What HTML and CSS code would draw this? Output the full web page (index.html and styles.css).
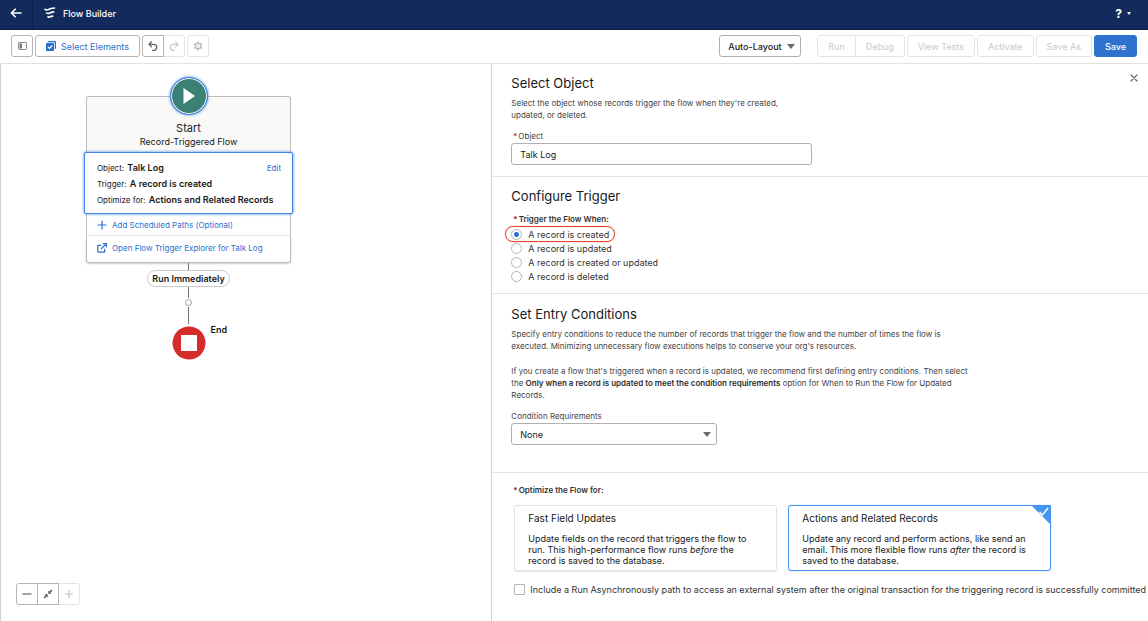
FILE: index.html
```html
<!DOCTYPE html>
<html lang="en">
<head>
<meta charset="utf-8">
<meta name="viewport" content="width=device-width, initial-scale=1">
<title>Flow Builder</title>
<link rel="stylesheet" href="styles.css">
</head>
<body>
<header class="topbar">
  <button class="back" type="button" aria-label="Back">
    <svg width="12" height="10" viewBox="0 0 12 10"><path d="M11 5H1.5M5.200 1.200 1.400 5l3.800 3.800" fill="none" stroke="#fff" stroke-width="1.600" stroke-linecap="round" stroke-linejoin="round"/></svg>
  </button>
  <svg class="brand-icon" width="12" height="12" viewBox="0 0 12 12"><path d="M1 2.400c1.600 1.300 3.200.3 4.800-.4C7.500 1.200 9 1.400 10.500 1M2.600 6c1.200 1 2.400.3 3.700-.2C7.500 5.200 8.500 5.200 9.700 4.900M4 9.800c1 .8 1.800.2 2.600-.2.7-.3 1.200-.4 2-.5" fill="none" stroke="#fff" stroke-width="1.600" stroke-linecap="round"/></svg>
  <span class="brand">Flow Builder</span>
  <button class="help" type="button" aria-label="Help">
    <span class="help-mark">?</span><svg width="4" height="3" viewBox="0 0 4 3"><path d="M0 0h4L2 3z" fill="#fff"/></svg>
  </button>
</header>

<nav class="toolbar" aria-label="Flow toolbar">
  <button class="btn icon-btn" type="button" aria-label="Toggle toolbox">
    <svg width="9" height="8" viewBox="0 0 9 8"><rect x=".5" y=".5" width="8" height="7" rx=".6" fill="none" stroke="#8a8a8a"/><path d="M1.500 1.500h2.500v5H1.500z" fill="#777"/></svg>
  </button>
  <button class="btn select-elements" type="button">
    <svg width="10" height="10" viewBox="0 0 10 10"><path d="M2.500 0h6.800q.7 0 .7.700v6.600q0 .7-.7.700h-.5V1.800q0-.6-.6-.6H1.800V.7q0-.7.700-.7z" fill="#2a6fcf"/><rect y="2" width="8" height="8" rx=".8" fill="#2a6fcf"/><path d="m2 6 1.500 1.500L6.300 4.500" fill="none" stroke="#fff" stroke-width="1.100"/></svg>
    Select Elements
  </button>
  <div class="group">
    <button class="btn icon-btn" type="button" aria-label="Undo">
      <svg width="10" height="10" viewBox="0 0 10 10"><path d="M3.500.8 1 3.300l2.500 2.500M1.200 3.300h4.500a3 3 0 0 1 0 6H4.500" fill="none" stroke="#666" stroke-width="1.300" stroke-linecap="round" stroke-linejoin="round"/></svg>
    </button>
    <button class="btn icon-btn" type="button" aria-label="Redo" disabled>
      <svg width="10" height="10" viewBox="0 0 10 10"><path d="M6.500.8 9 3.300 6.500 5.800M8.800 3.300H4.300a3 3 0 0 0 0 6h1.200" fill="none" stroke="#c9c9c9" stroke-width="1.200" stroke-linecap="round" stroke-linejoin="round"/></svg>
    </button>
  </div>
  <button class="btn icon-btn" type="button" aria-label="Settings" disabled>
    <svg width="10" height="10" viewBox="0 0 10 10"><circle cx="5" cy="5" r="2.700" fill="none" stroke="#b9b9b9" stroke-width="1.200"/><circle cx="5" cy="5" r=".8" fill="#c4c4c4"/><path d="M5 .5v1.600M5 7.900v1.600M1.100 2.750l1.400.8M7.500 6.450l1.400.8M1.100 7.250l1.400-.8M7.500 3.550l1.400-.8" stroke="#b9b9b9" stroke-width="1.700"/></svg>
  </button>
  <div class="picker layout-picker">
    <select aria-label="Layout mode"><option>Auto-Layout</option><option>Freeform</option></select>
  </div>
  <div class="group">
    <button class="btn" type="button" disabled>Run</button>
    <button class="btn" type="button" disabled>Debug</button>
  </div>
  <button class="btn" type="button" disabled>View Tests</button>
  <button class="btn" type="button" disabled>Activate</button>
  <button class="btn" type="button" disabled>Save As</button>
  <button class="btn save" type="button">Save</button>
</nav>

<main class="workspace">
  <section class="canvas" aria-label="Flow canvas">
    <div class="flow">
      <div class="start-icon"><svg width="12" height="16" viewBox="0 0 12 16"><path d="M.5 0 12 8 .5 16z" fill="#fff"/></svg></div>
      <article class="start-card">
        <div class="start-head">
          <h3 class="start-title">Start</h3>
          <p class="start-type">Record-Triggered Flow</p>
        </div>
        <div class="trigger">
          <div class="trigger-row"><span>Object: <b>Talk Log</b></span><a class="edit" href="#">Edit</a></div>
          <div class="trigger-row"><span>Trigger: <b>A record is created</b></span></div>
          <div class="trigger-row"><span>Optimize for: <b>Actions and Related Records</b></span></div>
        </div>
        <a class="card-link scheduled" href="#"><svg width="10" height="10" viewBox="0 0 10 10"><path d="M5 1v8M1 5h8" stroke="#2a6fcf" stroke-width="1.200" stroke-linecap="round"/></svg>Add Scheduled Paths (Optional)</a>
        <a class="card-link explorer" href="#"><svg width="10" height="10" viewBox="0 0 10 10"><path d="M4.300 2.300H1.200Q.8 2.300.8 2.700v6q0 .5.400.5h6q.5 0 .5-.5V5.800M5.800.7h3.500v3.500M9.200.8 4 6" fill="none" stroke="#2a6fcf" stroke-width="1.200"/></svg>Open Flow Trigger Explorer for Talk Log</a>
      </article>
      <i class="line line-first"></i>
      <div class="path-label">Run Immediately</div>
      <i class="line line-mid"></i>
      <button class="add-node" type="button" aria-label="Add element"></button>
      <i class="line line-last"></i>
      <div class="end-node">
        <svg width="34" height="34" viewBox="0 0 34 34"><circle cx="17" cy="17" r="16.500" fill="#d62b2b"/><path d="M9 9h16v16H9z" fill="#fff"/></svg>
        <span class="end-label">End</span>
      </div>
    </div>
    <div class="group zoom">
      <button class="btn icon-btn" type="button" aria-label="Zoom out"><svg width="10" height="10" viewBox="0 0 10 10"><path d="M.5 5h9" stroke="#666" stroke-width="1.200"/></svg></button>
      <button class="btn icon-btn" type="button" aria-label="Zoom to fit"><svg width="10" height="10" viewBox="0 0 10 10"><path d="M5.300 1.500v3.200h3.200zM4.700 8.500V5.300H1.500z" fill="#555"/><path d="M6.500 3.500 9 1M3.500 6.500 1 9" stroke="#555" stroke-width="1.500"/></svg></button>
      <button class="btn icon-btn" type="button" aria-label="Zoom in" disabled><svg width="10" height="10" viewBox="0 0 10 10"><path d="M5 1v8M1 5h8" stroke="#c4c4c4" stroke-width="1.200"/></svg></button>
    </div>
  </section>

  <form class="panel">
    <section class="section section-object">
      <div class="panel-head">
        <h2 class="heading">Select Object</h2>
        <button class="close" type="button" aria-label="Close"><svg width="8" height="8" viewBox="0 0 8 8"><path d="m1 1 6 6m0-6L1 7" stroke="#666" stroke-width="1.200" stroke-linecap="round"/></svg></button>
      </div>
      <p class="copy copy-narrow">Select the object whose records trigger the flow when they're created, updated, or deleted.</p>
      <label class="label label-object" for="object"><span class="req">*</span>Object</label>
      <input class="text-input" id="object" type="text" value="Talk Log">
    </section>

    <section class="section section-trigger">
      <h2 class="heading">Configure Trigger</h2>
      <fieldset class="fields fields-trigger">
        <legend class="legend"><span class="req">*</span>Trigger the Flow When:</legend>
        <label class="radio marked"><input type="radio" name="when" checked>A record is created</label>
        <label class="radio"><input type="radio" name="when">A record is updated</label>
        <label class="radio"><input type="radio" name="when">A record is created or updated</label>
        <label class="radio"><input type="radio" name="when">A record is deleted</label>
      </fieldset>
    </section>

    <section class="section section-entry">
      <h2 class="heading">Set Entry Conditions</h2>
      <p class="copy copy-first">Specify entry conditions to reduce the number of records that trigger the flow and the number of times the flow is executed. Minimizing unnecessary flow executions helps to conserve your org's resources.</p>
      <p class="copy copy-next">If you create a flow that's triggered when a record is updated, we recommend first defining entry conditions. Then select the <b>Only when a record is updated to meet the condition requirements</b> option for When to Run the Flow for Updated Records.</p>
      <label class="label" for="condition">Condition Requirements</label>
      <div class="picker condition-picker">
        <select id="condition"><option>None</option></select>
      </div>
    </section>

    <section class="section section-optimize">
      <fieldset class="fields">
        <legend class="legend"><span class="req">*</span>Optimize the Flow for:</legend>
        <div class="options">
          <label class="option"><input type="radio" name="optimize">
            <span class="option-title">Fast Field Updates</span>
            <span class="option-text">Update fields on the record that triggers the flow to run. This high-performance flow runs <em>before</em> the record is saved to the database.</span>
          </label>
          <label class="option"><input type="radio" name="optimize" checked>
            <span class="option-title">Actions and Related Records</span>
            <span class="option-text">Update any record and perform actions, like send an email. This more flexible flow runs <em>after</em> the record is saved to the database.</span>
            <svg class="corner" width="20" height="20" viewBox="0 0 20 20"><path d="M0 0h20v20z" fill="#4795f3"/><path d="m8.500 7 3 3L17 3" fill="none" stroke="#fff" stroke-width="1.400"/></svg>
          </label>
        </div>
      </fieldset>
      <label class="async"><input type="checkbox">Include a Run Asynchronously path to access an external system after the original transaction for the triggering record is successfully committed</label>
    </section>
  </form>
</main>
</body>
</html>
```
FILE: styles.css
```css
* {
  box-sizing: border-box;
}

body {
  margin: 0;
  min-height: 100vh;
  display: flex;
  flex-direction: column;
  background: #fff;
  color: #181818;
  font-family: Inter, "Liberation Sans", sans-serif;
  font-size: 9px;
}

h2,
h3,
p {
  margin: 0;
  font-weight: 400;
}

button,
input,
select {
  font: inherit;
  color: inherit;
}

svg {
  display: block;
  flex: none;
}

a {
  color: #2a6fcf;
  text-decoration: none;
}

/* Top bar */
.topbar {
  display: flex;
  align-items: center;
  height: 30px;
  padding-bottom: 3px;
  background: #122b5c;
  border-bottom: 1px solid #0b1d42;
  color: #fff;
}

.back {
  display: flex;
  align-items: center;
  justify-content: center;
  align-self: stretch;
  width: 33px;
  margin-bottom: -3px;
  padding: 0 0 3px;
  border: 0;
  border-right: 1px solid #0d224c;
  background: none;
}

.brand-icon {
  margin: 0 7px 0 11px;
}

.brand {
  font-weight: 500;
}

.help {
  display: flex;
  align-items: center;
  gap: 5px;
  margin-left: auto;
  padding: 0 17px 0 0;
  border: 0;
  background: none;
}

.help-mark {
  font-size: 12px;
  font-weight: 700;
}

/* Toolbar */
.toolbar {
  display: flex;
  align-items: center;
  gap: 2px;
  height: 34px;
  padding: 0 11px 1px;
  border-bottom: 1px solid #e2e2e2;
}

.btn {
  display: flex;
  align-items: center;
  justify-content: center;
  gap: 5px;
  height: 22px;
  padding: 0 10px;
  border: 1px solid #b5b5b5;
  border-radius: 3px;
  background: #fff;
  white-space: nowrap;
}

.btn:disabled {
  border-color: #e4e4e4;
  color: #c9c9c9;
}

.icon-btn {
  width: 22px;
  padding: 0;
}

.select-elements {
  color: #2a6fcf;
}

.group {
  display: flex;
}

.group .btn:not(:first-child) {
  margin-left: -1px;
  border-top-left-radius: 0;
  border-bottom-left-radius: 0;
}

.group .btn:not(:last-child) {
  border-top-right-radius: 0;
  border-bottom-right-radius: 0;
}

.group .btn:enabled {
  position: relative;
}

.save {
  border-color: #2f72cd;
  background: #2f72cd;
  color: #fff;
  font-weight: 500;
}

.picker {
  position: relative;
}

.picker::after {
  content: "";
  position: absolute;
  top: 9px;
  right: 6px;
  border: 4px solid transparent;
  border-top: 5px solid #6b6b6b;
  border-bottom: 0;
  pointer-events: none;
}

.picker select {
  appearance: none;
  display: block;
  width: 100%;
  height: 22px;
  padding: 0 8px;
  border: 1px solid #b0b0b0;
  border-radius: 3px;
  background: #fff;
}

.layout-picker {
  width: 82px;
  margin: 0 14px 0 auto;
  font-weight: 500;
}

/* Canvas */
.workspace {
  flex: 1;
  display: flex;
}

.canvas {
  flex: 0 0 42.8%;
  display: flex;
  flex-direction: column;
  justify-content: space-between;
  align-items: flex-start;
  padding: 13px 0 16px 15px;
  border-left: 1px solid #d4d4d4;
}

.flow {
  display: flex;
  flex-direction: column;
  align-items: center;
  width: 209px;
  margin-left: 68px;
}

.start-icon {
  position: relative;
  z-index: 1;
  display: flex;
  align-items: center;
  justify-content: center;
  width: 38px;
  height: 38px;
  margin-bottom: -19px;
  border: 1px solid #3f83e4;
  border-radius: 50%;
  background: #3a8075;
  box-shadow: inset 0 0 0 1px #fff, 0 0 3px #3f83e4;
}

.start-card {
  width: 100%;
  padding: 0 2px;
}

.start-head {
  padding: 24px 0 4px;
  border: 1px solid #bdbdbd;
  border-bottom: 0;
  border-radius: 3px 3px 0 0;
  background: #f9f9f8;
  text-align: center;
}

.start-title {
  font-size: 11px;
  line-height: 15px;
}

.start-type {
  line-height: 12px;
}

.trigger {
  position: relative;
  margin: 0 -2px;
  padding: 7px 11px 5px 12px;
  border: 1px solid #3f83e4;
  border-radius: 2px;
  background: #fff;
  box-shadow: 0 0 3px #3f83e4;
  font-size: 8px;
}

.trigger b {
  margin-left: 1px;
  font-size: 9px;
  font-weight: 600;
}

.trigger-row {
  display: flex;
  justify-content: space-between;
  line-height: 16px;
  white-space: nowrap;
}

.card-link {
  display: flex;
  align-items: center;
  gap: 5px;
  padding-left: 10px;
  border: 1px solid #bdbdbd;
  border-top: 0;
  white-space: nowrap;
  font-size: 8px;
}

.scheduled {
  height: 22px;
  border-bottom-color: #e2e2e2;
}

.explorer {
  height: 27px;
  padding-bottom: 2px;
  border-radius: 0 0 3px 3px;
  box-shadow: 0 1px 2px #0003;
}

.line {
  width: 1px;
  background: #747474;
}

.line-first {
  height: 7px;
}

.line-mid {
  height: 11px;
}

.line-last {
  height: 17px;
  margin: 1px 0 2px;
}

.path-label {
  padding: 0 4px;
  border: 1px solid #c9c9c9;
  border-radius: 9px;
  font-weight: 600;
  line-height: 15px;
}

.add-node {
  width: 7px;
  height: 7px;
  margin-top: 1px;
  padding: 0;
  border: 1px solid #9a9a9a;
  border-radius: 50%;
  background: #fff;
}

.end-node {
  position: relative;
}

.end-label {
  position: absolute;
  left: 39px;
  top: -2px;
  font-weight: 600;
}

/* Property panel */
.panel {
  flex: 1;
  min-width: 0;
  border-left: 1px solid #d4d4d4;
}

.section {
  padding: 10px 19px;
  border-bottom: 1px solid #e2e2e2;
}

.section-object {
  padding-bottom: 11px;
}

.section-entry {
  padding-top: 11px;
  padding-bottom: 27px;
}

.section-optimize {
  padding-top: 11px;
  border-bottom: 0;
}

.panel-head {
  display: flex;
  justify-content: space-between;
  align-items: flex-start;
}

.heading {
  margin-bottom: 2px;
  font-size: 13px;
  line-height: 18px;
}

.close {
  margin: 0 -9px 0 0;
  padding: 0;
  border: 0;
  background: none;
}

.copy {
  max-width: 468px;
  margin-top: 3px;
  color: #444;
  font-size: 8px;
  line-height: 12px;
}

.copy b {
  color: #2b2b2b;
  font-weight: 600;
}

.copy-narrow {
  max-width: 288px;
}

.copy-first {
  margin-top: 5px;
}

.copy-next {
  margin-top: 13px;
}

.label {
  display: block;
  margin: 9px 0 1px;
  color: #444;
  font-size: 8px;
  line-height: 12px;
}

.label-object {
  padding-left: 2px;
}

.req {
  margin-right: 1px;
  color: #ba0517;
}

.text-input {
  display: block;
  width: 301px;
  height: 22px;
  padding: 0 8px;
  border: 1px solid #b0b0b0;
  border-radius: 3px;
}

.condition-picker {
  width: 206px;
}

.fields {
  min-width: 0;
  margin: 0;
  padding: 0;
  border: 0;
}

.fields-trigger {
  margin-top: 8px;
}

.legend {
  padding: 0 0 2px 2px;
  color: #333;
  font-size: 8px;
  font-weight: 600;
  line-height: 12px;
}

.radio {
  position: relative;
  display: flex;
  align-items: center;
  gap: 6px;
  width: max-content;
  height: 14px;
  color: #333;
}

.radio input {
  appearance: none;
  width: 11px;
  height: 11px;
  margin: 0;
  border: 1px solid #b5b5b5;
  border-radius: 50%;
  background: #fff;
}

.radio input:checked {
  background: radial-gradient(circle, #2a6fcf 0 2px, #fff 3px);
}

.marked::after {
  content: "";
  position: absolute;
  inset: -1px -6px -1px -6px;
  border: 1px solid #e8472a;
  border-radius: 8px;
  box-shadow: 0 0 1px #e8472a;
}

.options {
  display: flex;
  gap: 11px;
  margin: 7px 0 13px 3px;
}

.option {
  position: relative;
  width: 263px;
  padding: 5px 20px 4px 13px;
  border: 1px solid #e2e2e2;
  border-radius: 3px;
  box-shadow: 0 1px 1px #0000001a;
}

.option:has(input:checked) {
  border-color: #4795f3;
  box-shadow: 0 0 1px #4795f3;
}

.option input {
  position: absolute;
  opacity: 0;
}

.option-title,
.option-text {
  display: block;
}

.option-title {
  margin-bottom: 7px;
  font-size: 10px;
  line-height: 15px;
}

.option-text {
  line-height: 11px;
}

.corner {
  position: absolute;
  top: -1px;
  right: -1px;
}

.async {
  display: flex;
  align-items: center;
  gap: 5px;
  padding-left: 3px;
  color: #333;
  white-space: nowrap;
}

.async input {
  appearance: none;
  flex: none;
  width: 11px;
  height: 11px;
  margin: 0;
  border: 1px solid #b5b5b5;
  border-radius: 1px;
}
```
